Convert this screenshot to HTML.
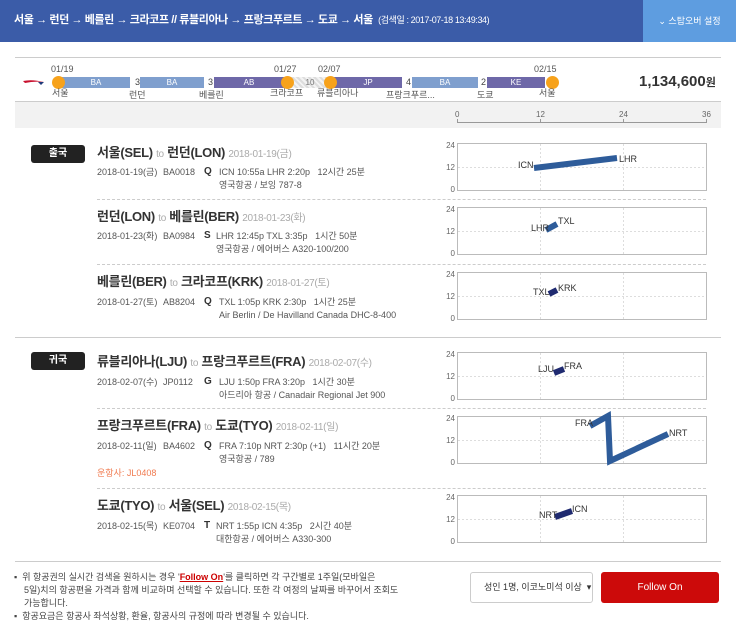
<!DOCTYPE html>
<html><head><meta charset="utf-8">
<style>
*{margin:0;padding:0;box-sizing:border-box}
body{width:736px;height:622px;background:#fff;font-family:"Liberation Sans","Noto Sans CJK KR",sans-serif;position:relative;overflow:hidden;color:#333}
.a{position:absolute;white-space:nowrap;line-height:1.2}
.hdr{left:0;top:0;width:736px;height:42px;background:#3b5ca8}
.t{font-size:13px;font-weight:bold;color:#333;letter-spacing:-0.3px}
.t .to{font-size:10px;color:#aaa;font-weight:normal}
.t .d{font-size:10px;color:#aaa;font-weight:normal;letter-spacing:-0.3px}
.dt{font-size:9px;color:#555}
.cls{font-size:10px;font-weight:bold;color:#333}
.badge{background:#222;color:#fff;font-size:10px;font-weight:bold;border-radius:3px;width:54px;height:18px;line-height:18px;text-align:center}
.dash{border-top:1px dashed #ccc;height:0}
.bar{height:11px;top:77px;color:#fff;font-size:8px;text-align:center;line-height:11px}
.dot{width:13px;height:13px;border-radius:50%;background:#f7a21b;top:76px}
.num{width:11px;height:11px;border-radius:50%;background:#fff;font-size:9px;line-height:11px;text-align:center;top:77px;color:#444}
.sm{font-size:9px;color:#555}
.ax{font-size:8px;color:#666}
</style></head><body>
<div class="a hdr"></div>
<div class="a" style="left:14px;top:14px;font-size:11px;font-weight:bold;color:#fff;letter-spacing:-0.4px">서울 → 런던 → 베를린 → 크라코프 // 류블리아나 → 프랑크푸르트 → 도쿄 → 서울 &nbsp;<span style="font-weight:normal;font-size:9px">(검색일 : 2017-07-18 13:49:34)</span></div>
<div class="a" style="left:643px;top:0;width:93px;height:42px;background:#5e9de0;color:#fff;font-size:9px;text-align:center;line-height:42px">⌄ 스탑오버 설정</div>

<div class="a" style="left:15px;top:57px;width:706px;border-top:1px solid #ccc"></div>
<svg class="a" style="left:22px;top:78px" width="24" height="8"><path d="M1 3 Q10 1 22 4 Q12 3 3 5Z" fill="#c8102e"/><path d="M16 4 L22 4 L19 7Z" fill="#1f3a7a"/></svg>
<div class="a sm" style="left:51px;top:64px">01/19</div>
<div class="a sm" style="left:274px;top:64px">01/27</div>
<div class="a sm" style="left:318px;top:64px">02/07</div>
<div class="a sm" style="left:534px;top:64px">02/15</div>
<div class="a bar" style="left:62px;width:68px;background:#7f9fce">BA</div>
<div class="a num" style="left:132px">3</div>
<div class="a bar" style="left:140px;width:64px;background:#7f9fce">BA</div>
<div class="a num" style="left:205px">3</div>
<div class="a bar" style="left:214px;width:70px;background:#6e68a8">AB</div>
<div class="a bar" style="left:290px;width:40px;background:repeating-linear-gradient(45deg,#ddd 0 2px,#f3f3f3 2px 4px);color:#777">10</div>
<div class="a bar" style="left:334px;width:68px;background:#6e68a8">JP</div>
<div class="a num" style="left:403px">4</div>
<div class="a bar" style="left:412px;width:66px;background:#7f9fce">BA</div>
<div class="a num" style="left:478px">2</div>
<div class="a bar" style="left:487px;width:58px;background:#6e68a8">KE</div>
<div class="a dot" style="left:52px"></div>
<div class="a dot" style="left:281px"></div>
<div class="a dot" style="left:324px"></div>
<div class="a dot" style="left:546px"></div>
<div class="a sm" style="left:52px;top:88px">서울</div>
<div class="a sm" style="left:129px;top:90px">런던</div>
<div class="a sm" style="left:199px;top:90px">베를린</div>
<div class="a sm" style="left:270px;top:88px">크라코프</div>
<div class="a sm" style="left:317px;top:88px">류블리아나</div>
<div class="a sm" style="left:386px;top:90px">프랑크푸르...</div>
<div class="a sm" style="left:477px;top:90px">도쿄</div>
<div class="a sm" style="left:539px;top:88px">서울</div>
<div class="a" style="left:639px;top:73px;font-size:15px;font-weight:bold;color:#333">1,134,600<span style="font-size:11px">원</span></div>

<div class="a" style="left:15px;top:101px;width:706px;height:27px;background:#f2f2f2;border-top:1px solid #ccc"></div>
<div class="a ax" style="left:455px;top:110px">0</div>
<div class="a ax" style="left:536px;top:110px">12</div>
<div class="a ax" style="left:619px;top:110px">24</div>
<div class="a ax" style="left:702px;top:110px">36</div>
<div class="a" style="left:457px;top:122px;width:250px;border-top:1px solid #999"></div>
<div class="a" style="left:457px;top:119px;height:4px;border-left:1px solid #999"></div>
<div class="a" style="left:540px;top:119px;height:4px;border-left:1px solid #999"></div>
<div class="a" style="left:623px;top:119px;height:4px;border-left:1px solid #999"></div>
<div class="a" style="left:706px;top:119px;height:4px;border-left:1px solid #999"></div>

<svg class="a" style="left:0;top:0" width="736" height="622">
<g fill="none" stroke="#bbb" stroke-width="1">
<rect x="457.5" y="143.5" width="249" height="47"/><rect x="457.5" y="207.5" width="249" height="47"/><rect x="457.5" y="272.5" width="249" height="47"/><rect x="457.5" y="352.5" width="249" height="47"/><rect x="457.5" y="416.5" width="249" height="47"/><rect x="457.5" y="495.5" width="249" height="47"/>
</g>
<g stroke="#ddd" stroke-dasharray="2,2">
<path d="M540.5 144V190M623.5 144V190M458 167.5H706M540.5 208V254M623.5 208V254M458 231.5H706M540.5 273V319M623.5 273V319M458 296.5H706M540.5 353V399M623.5 353V399M458 376.5H706M540.5 417V463M623.5 417V463M458 440.5H706M540.5 496V542M623.5 496V542M458 519.5H706"/>
</g>
<g font-size="8" fill="#666" font-family="Liberation Sans,sans-serif" text-anchor="end">
<text x="455" y="148">24</text><text x="455" y="170">12</text><text x="455" y="192">0</text>
<text x="455" y="212">24</text><text x="455" y="234">12</text><text x="455" y="256">0</text>
<text x="455" y="277">24</text><text x="455" y="299">12</text><text x="455" y="321">0</text>
<text x="455" y="357">24</text><text x="455" y="379">12</text><text x="455" y="401">0</text>
<text x="455" y="421">24</text><text x="455" y="443">12</text><text x="455" y="465">0</text>
<text x="455" y="500">24</text><text x="455" y="522">12</text><text x="455" y="544">0</text>
</g>
<g fill="none" stroke-width="6" stroke-linejoin="miter">
<path d="M534 168L617 158" stroke="#2e5c9a"/>
<path d="M546 230L557 224" stroke="#2e5c9a"/>
<path d="M549 294L557 290" stroke="#1f2a70"/>
<path d="M554 373L564 369" stroke="#1f2a70"/>
<path d="M590 426L608 416L610 461L668 434" stroke="#2e5c9a"/>
<path d="M555 517L572 511" stroke="#1f2a70"/>
</g>
<g font-size="9" fill="#333" font-family="Liberation Sans,sans-serif">
<text x="518" y="168">ICN</text><text x="619" y="162">LHR</text>
<text x="531" y="231">LHR</text><text x="558" y="224">TXL</text>
<text x="533" y="295">TXL</text><text x="558" y="291">KRK</text>
<text x="538" y="372">LJU</text><text x="564" y="369">FRA</text>
<text x="575" y="426">FRA</text><text x="669" y="436">NRT</text>
<text x="539" y="518">NRT</text><text x="572" y="512">ICN</text>
</g>
</svg>

<div class="a badge" style="left:31px;top:145px">출국</div>
<div class="a t" style="left:97px;top:145px">서울(SEL) <span class="to">to</span> 런던(LON) <span class="d">2018-01-19(금)</span></div>
<div class="a dt" style="left:97px;top:167px">2018-01-19(금)</div>
<div class="a dt" style="left:163px;top:167px">BA0018</div>
<div class="a cls" style="left:204px;top:166px">Q</div>
<div class="a dt" style="left:219px;top:167px">ICN 10:55a LHR 2:20p&nbsp;&nbsp; 12시간 25분</div>
<div class="a dt" style="left:219px;top:180px">영국항공 / 보잉 787-8</div>
<div class="a dash" style="left:97px;top:199px;width:609px"></div>

<div class="a t" style="left:97px;top:209px">런던(LON) <span class="to">to</span> 베를린(BER) <span class="d">2018-01-23(화)</span></div>
<div class="a dt" style="left:97px;top:231px">2018-01-23(화)</div>
<div class="a dt" style="left:163px;top:231px">BA0984</div>
<div class="a cls" style="left:204px;top:230px">S</div>
<div class="a dt" style="left:216px;top:231px">LHR 12:45p TXL 3:35p&nbsp;&nbsp; 1시간 50분</div>
<div class="a dt" style="left:216px;top:244px">영국항공 / 에어버스 A320-100/200</div>
<div class="a dash" style="left:97px;top:264px;width:609px"></div>

<div class="a t" style="left:97px;top:274px">베를린(BER) <span class="to">to</span> 크라코프(KRK) <span class="d">2018-01-27(토)</span></div>
<div class="a dt" style="left:97px;top:297px">2018-01-27(토)</div>
<div class="a dt" style="left:163px;top:297px">AB8204</div>
<div class="a cls" style="left:204px;top:296px">Q</div>
<div class="a dt" style="left:219px;top:297px">TXL 1:05p KRK 2:30p&nbsp;&nbsp; 1시간 25분</div>
<div class="a dt" style="left:219px;top:310px">Air Berlin / De Havilland Canada DHC-8-400</div>

<div class="a" style="left:15px;top:337px;width:706px;border-top:1px solid #ccc"></div>

<div class="a badge" style="left:31px;top:352px">귀국</div>
<div class="a t" style="left:97px;top:354px">류블리아나(LJU) <span class="to">to</span> 프랑크푸르트(FRA) <span class="d">2018-02-07(수)</span></div>
<div class="a dt" style="left:97px;top:377px">2018-02-07(수)</div>
<div class="a dt" style="left:163px;top:377px">JP0112</div>
<div class="a cls" style="left:204px;top:376px">G</div>
<div class="a dt" style="left:219px;top:377px">LJU 1:50p FRA 3:20p&nbsp;&nbsp; 1시간 30분</div>
<div class="a dt" style="left:219px;top:390px">아드리아 항공 / Canadair Regional Jet 900</div>
<div class="a dash" style="left:97px;top:408px;width:609px"></div>

<div class="a t" style="left:97px;top:418px">프랑크푸르트(FRA) <span class="to">to</span> 도쿄(TYO) <span class="d">2018-02-11(일)</span></div>
<div class="a dt" style="left:97px;top:441px">2018-02-11(일)</div>
<div class="a dt" style="left:163px;top:441px">BA4602</div>
<div class="a cls" style="left:204px;top:440px">Q</div>
<div class="a dt" style="left:219px;top:441px">FRA 7:10p NRT 2:30p (+1)&nbsp;&nbsp; 11시간 20분</div>
<div class="a dt" style="left:219px;top:454px">영국항공 / 789</div>
<div class="a dt" style="left:97px;top:468px;color:#f07b50">운항사: JL0408</div>
<div class="a dash" style="left:97px;top:488px;width:609px"></div>

<div class="a t" style="left:97px;top:498px">도쿄(TYO) <span class="to">to</span> 서울(SEL) <span class="d">2018-02-15(목)</span></div>
<div class="a dt" style="left:97px;top:521px">2018-02-15(목)</div>
<div class="a dt" style="left:163px;top:521px">KE0704</div>
<div class="a cls" style="left:204px;top:520px">T</div>
<div class="a dt" style="left:216px;top:521px">NRT 1:55p ICN 4:35p&nbsp;&nbsp; 2시간 40분</div>
<div class="a dt" style="left:216px;top:534px">대한항공 / 에어버스 A330-300</div>

<div class="a" style="left:15px;top:561px;width:706px;border-top:1px solid #ccc"></div>
<div class="a" style="left:14px;top:571px;font-size:9px;color:#444;line-height:13px;white-space:normal;width:390px">
<div>▪&nbsp; 위 항공권의 실시간 검색을 원하시는 경우 '<b style="color:#c00;text-decoration:underline">Follow On</b>'를 클릭하면 각 구간별로 1주일(모바일은</div>
<div style="padding-left:10px">5일)치의 항공편을 가격과 함께 비교하며 선택할 수 있습니다. 또한 각 여정의 날짜를 바꾸어서 조회도 가능합니다.</div>
<div>▪&nbsp; 항공요금은 항공사 좌석상황, 환율, 항공사의 규정에 따라 변경될 수 있습니다.</div>
</div>
<div class="a" style="left:470px;top:572px;width:123px;height:31px;border:1px solid #ccc;border-radius:3px;font-size:9px;line-height:29px;padding-left:13px;color:#333">성인 1명, 이코노미석 이상 &nbsp;▾</div>
<div class="a" style="left:601px;top:572px;width:118px;height:31px;background:#cc0a0a;border-radius:3px;color:#fff;font-size:10px;line-height:31px;text-align:center">Follow On</div>
</body></html>
